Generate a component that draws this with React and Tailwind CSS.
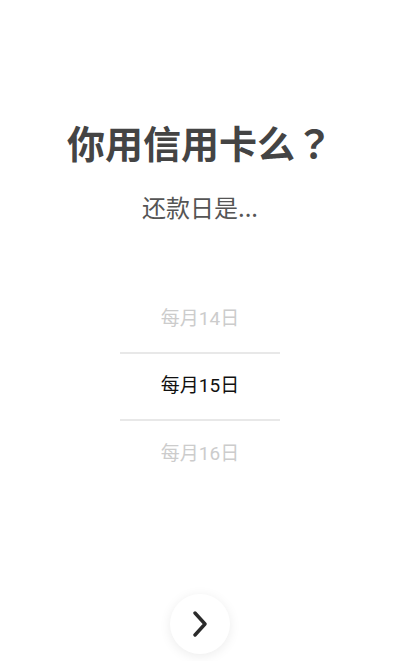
import React, { useState } from 'react'

const days = Array.from({ length: 31 }, (_, i) => i + 1)

export default function App() {
    const [day] = useState(15)
    const idx = days.indexOf(day)
    const visible = [days[idx - 1], days[idx], days[idx + 1]]

    return (
        <div className="w-[400px] h-[661px] bg-white flex flex-col items-center overflow-hidden"
            style={{ fontFamily: 'Roboto, "Noto Sans CJK SC", sans-serif' }}>
            <h1 className="shrink-0 mt-[123px] text-[38px] leading-[38px] font-bold text-[#444]">
                你用信用卡么<span style={{ fontFamily: '"Noto Sans CJK JP", sans-serif' }}>？</span>
            </h1>
            <p className="shrink-0 mt-[30px] text-[24px] leading-[26px] text-[#555]"
                style={{ fontFamily: '"Noto Sans CJK SC", sans-serif' }}>还款日是...</p>

            <div className="shrink-0 mt-[66px] w-[160px] flex flex-col">
                {visible.map((d, i) => (
                    <div key={d}
                        className={i === 1
                            ? 'h-[69px] flex items-center justify-center border-y-2 border-[#e8e8e8] text-[19px] text-[#111]'
                            : 'h-[66px] flex items-center justify-center text-[19px] text-[#cccccc]'}>
                        每月{d}日
                    </div>
                ))}
            </div>

            <button className="shrink-0 mt-[107px] w-[60px] h-[60px] rounded-full bg-white shadow-[0_2px_12px_rgba(0,0,0,0.08)] flex items-center justify-center">
                <svg width="16" height="26" viewBox="0 0 16 26" fill="none">
                    <path d="M3 2 L13 13 L3 24" stroke="#2b2b2b" strokeWidth="3.4" strokeLinecap="round" strokeLinejoin="round" />
                </svg>
            </button>
        </div>
    )
}
